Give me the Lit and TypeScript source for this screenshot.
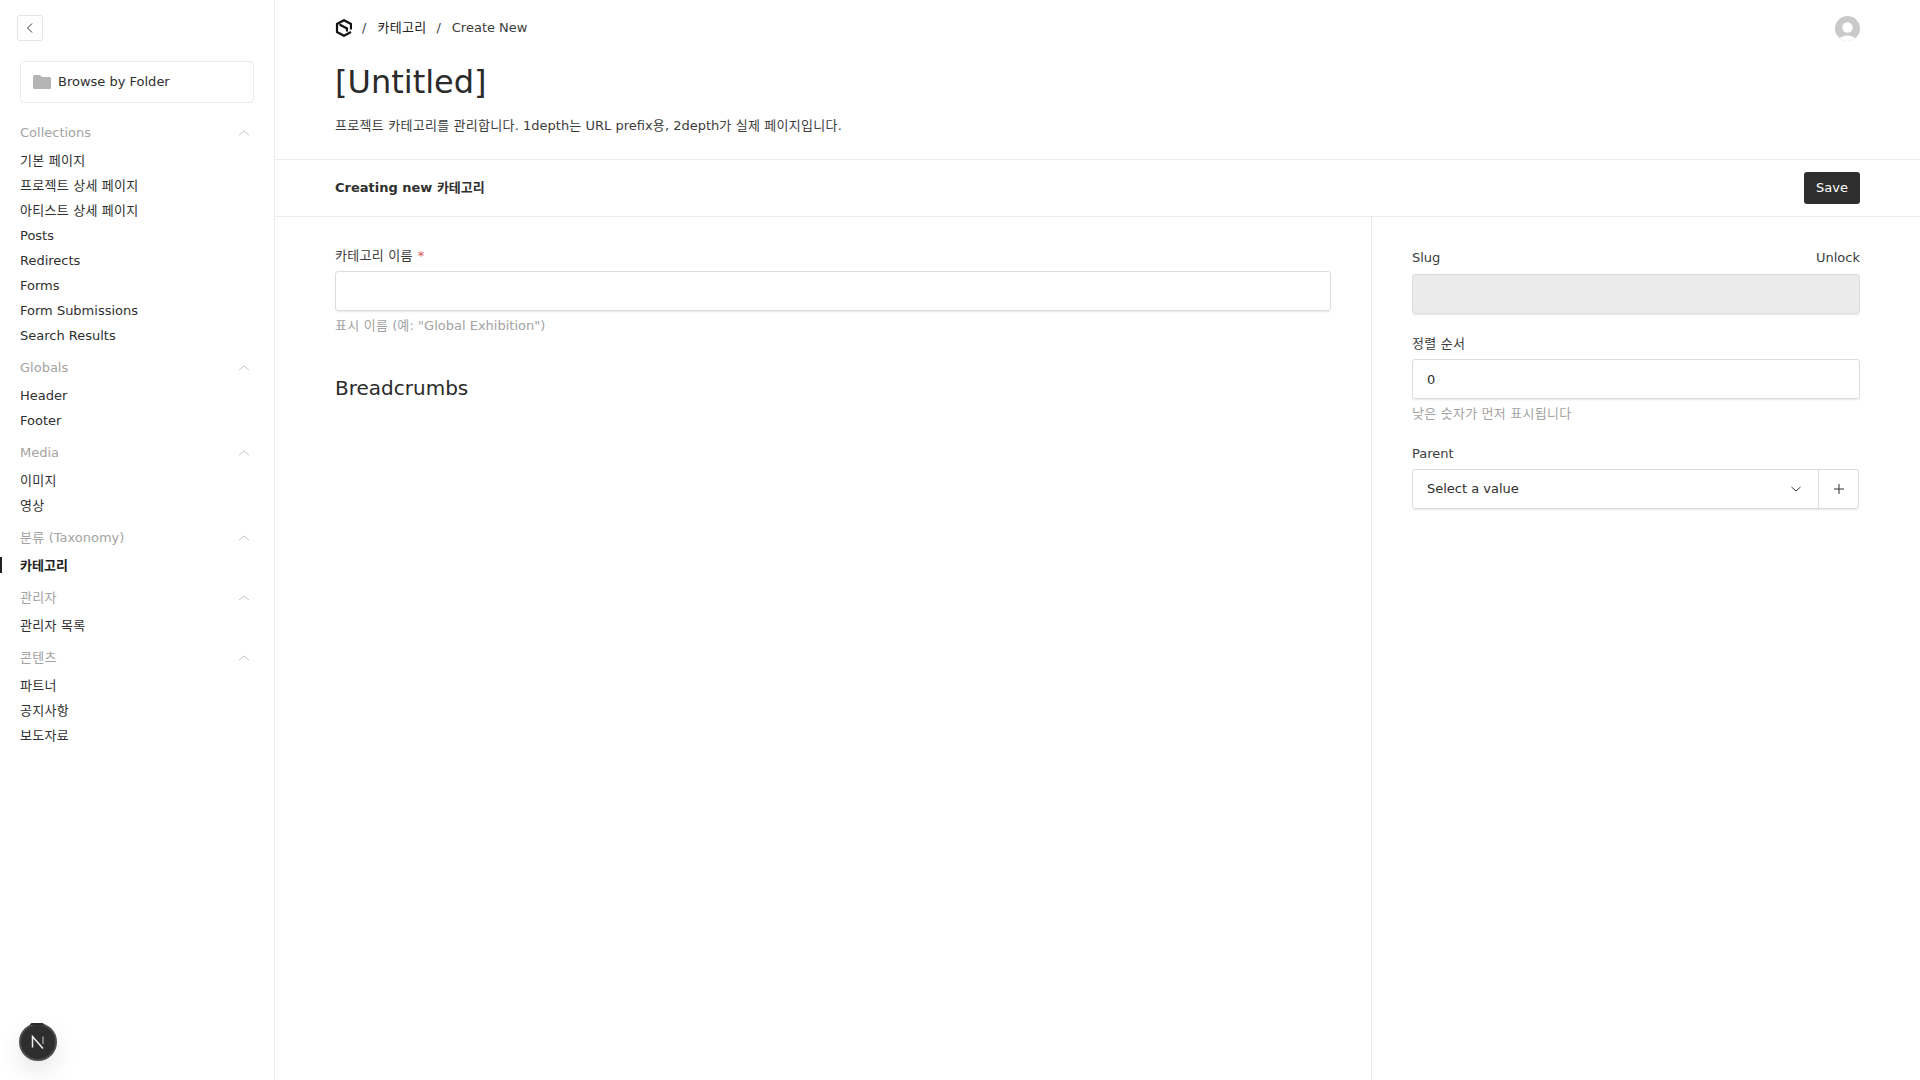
import { LitElement, html, css, svg } from "lit";
import { customElement } from "lit/decorators.js";

const groups: { label: string; items: string[] }[] = [
  { label: "Collections", items: ["기본 페이지", "프로젝트 상세 페이지", "아티스트 상세 페이지", "Posts", "Redirects", "Forms", "Form Submissions", "Search Results"] },
  { label: "Globals", items: ["Header", "Footer"] },
  { label: "Media", items: ["이미지", "영상"] },
  { label: "분류 (Taxonomy)", items: ["카테고리"] },
  { label: "관리자", items: ["관리자 목록"] },
  { label: "콘텐츠", items: ["파트너", "공지사항", "보도자료"] },
];

const chevronUp = svg`<svg class="chev" width="12" height="12" viewBox="0 0 12 12" fill="none"><path d="M1 8 L6 4 L11 8" stroke="#c4c4c4" stroke-width="1"/></svg>`;

/** Wraps Hangul runs so they can carry the reference's slightly wider tracking. */
const ko = (text: string) =>
  text.split(/([가-힣]+)/).map((part, i) => (i % 2 ? html`<span class="ko">${part}</span>` : part));

@customElement("app-root")
export class AppRoot extends LitElement {
  static styles = css`
    :host { display: block; width: 1920px; height: 1080px; overflow: hidden; background: #fff; color: #2f2f2f;
      font-family: "DejaVu Sans", "Noto Sans CJK KR", sans-serif; font-size: 13px; line-height: 20px; position: relative; }
    * { box-sizing: border-box; }
    .ko { letter-spacing: .29px; }
    .item.active .ko, .creating .ko { letter-spacing: 0; }
    .app { display: flex; height: 100%; }
    .side { width: 275px; flex: none; border-right: 1px solid #ebebeb; padding: 15px 20px 0; }
    .back { width: 26px; height: 26px; margin-left: -3px; border: 1px solid #e3e3e3; border-radius: 3px; display: flex; align-items: center; justify-content: center; }
    .folder { margin-top: 20px; height: 42px; width: 234px; border: 1px solid #ebebeb; border-radius: 4px; display: flex; align-items: center; gap: 7px; padding: 0 11px 0 12px; }
    .group { margin-top: 10px; }
    .folder + .group { margin-top: 20px; }
    .glabel { display: flex; justify-content: space-between; align-items: center; height: 20px; color: #a3a3a3; padding-right: 4px; margin-bottom: 5px; }
    .item { height: 25px; display: flex; align-items: center; color: #2f2f2f; position: relative; }
    .item > span { display: block; }
    .item.active { font-weight: 700; color: #222; }
    .item.active::before { content: ""; position: absolute; left: -20px; top: 4px; height: 16px; width: 2px; background: #222; }
    .main { flex: 1; min-width: 0; display: flex; flex-direction: column; }
    .top { padding: 0 60px; height: 159px; }
    .crumbs { height: 56px; display: flex; align-items: center; justify-content: space-between; }
    .trail { display: flex; align-items: center; color: #3c3c3c; }
    .sep { margin: 0 11px 0 10px; }
    .cur { color: #222; }
    h1 { margin: 0; font-size: 32px; font-weight: 400; line-height: 53px; color: #2b2b2b; }
    .desc { margin-top: 7px; color: #3c3c3c; }
    .controls { height: 58px; border-top: 1px solid #ebebeb; border-bottom: 1px solid #ebebeb; padding: 0 60px; display: flex; align-items: center; justify-content: space-between; }
    .creating { font-weight: 700; color: #2f2f2f; }
    .save { width: 56px; height: 32px; background: #2f2f2f; color: #fff; border-radius: 3px; display: flex; align-items: center; justify-content: center; }
    .body { flex: 1; display: flex; }
    .left { width: 1097px; flex: none; border-right: 1px solid #ebebeb; padding: 29px 40px 0 60px; }
    .right { flex: 1; padding: 31px 60px 0 40px; }
    .label { display: flex; justify-content: space-between; color: #3c3c3c; height: 20px; }
    .req { color: #e0555a; margin-left: 5px; }
    .input { height: 40px; margin-top: 5px; border: 1px solid #dcdcdc; border-radius: 3px; background: #fff; box-shadow: 0 2px 2px -1px rgba(0,0,0,.1); display: flex; align-items: center; padding: 0 15px; }
    .input.ro { background: #ebebeb; margin-top: 6px; }
    .input.num { padding: 1px 14px 0 14px; }
    .help { margin-top: 5px; color: #a3a3a3; height: 20px; }
    h3 { margin: 37px 0 0; font-size: 20px; font-weight: 400; line-height: 30px; color: #2b2b2b; }
    .f2 { margin-top: 20px; }
    .f3 { margin-top: 20px; }
    .sel { display: flex; margin-top: 5px; width: 447px; height: 40px; border: 1px solid #dcdcdc; border-radius: 3px; box-shadow: 0 2px 2px -1px rgba(0,0,0,.1); }
    .sel .val { flex: 1; display: flex; align-items: center; justify-content: space-between; padding: 0 17px 0 14px; border-right: 1px solid #dcdcdc; }
    .sel .add { width: 39px; flex: none; display: flex; align-items: center; justify-content: center; }
    .next { position: absolute; left: 19px; top: 1023px; width: 38px; height: 38px; border-radius: 50%; background: #2e2e2e; border: 2px solid #4d4d4d; box-shadow: 0 10px 24px rgba(0,0,0,.1); display: flex; align-items: center; justify-content: center; }
    .next::before { content: ""; position: absolute; left: 9px; top: -2px; width: 14px; height: 2px; background: #2a2a2a; border-radius: 2px 2px 0 0; }
  `;

  render() {
    return html`
      <div class="app">
        <aside class="side">
          <div class="back"><svg width="12" height="12" viewBox="0 0 12 12" fill="none"><path d="M8 1.5 L3.5 6 L8 10.5" stroke="#333" stroke-width="1"/></svg></div>
          <div class="folder">
            <svg width="18" height="14" viewBox="0 0 18 14"><path d="M1.5 0H7L9 2H16.5A1.5 1.5 0 0 1 18 3.5V12.5A1.5 1.5 0 0 1 16.5 14H1.5A1.5 1.5 0 0 1 0 12.5V1.5A1.5 1.5 0 0 1 1.5 0Z" fill="#b5b5b5"/></svg>
            <span>Browse by Folder</span>
          </div>
          ${groups.map((g) => html`
            <div class="group">
              <div class="glabel"><span>${ko(g.label)}</span>${chevronUp}</div>
              ${g.items.map((i) => html`<div class="item ${i === "카테고리" ? "active" : ""}"><span>${ko(i)}</span></div>`)}
            </div>`)}
        </aside>
        <main class="main">
          <div class="top">
            <div class="crumbs">
              <div class="trail">
                <svg width="17" height="18" viewBox="0 0 17 18" fill="none"><path d="M16 10.5V5L9 1.2L2 5V13L9 16.8L16 13" stroke="#111" stroke-width="2.2"/><path d="M4.5 5.5L12 9.5V12.5" stroke="#111" stroke-width="2.2"/></svg>
                <span class="sep">/</span><span class="cur">${ko("카테고리")}</span><span class="sep">/</span><span>Create New</span>
              </div>
              <svg width="25" height="25" viewBox="0 0 25 25"><defs><clipPath id="c"><circle cx="12.5" cy="12.5" r="12.5"/></clipPath></defs><circle cx="12.5" cy="12.5" r="12.5" fill="#c9c9c9"/><g clip-path="url(#c)"><circle cx="12.5" cy="11.5" r="5.2" fill="#fff"/><ellipse cx="12.5" cy="26.5" rx="10" ry="7" fill="#fff"/></g></svg>
            </div>
            <h1>[Untitled]</h1>
            <div class="desc">${ko("프로젝트 카테고리를 관리합니다. 1depth는 URL prefix용, 2depth가 실제 페이지입니다.")}</div>
          </div>
          <div class="controls">
            <span class="creating">Creating new ${ko("카테고리")}</span>
            <span class="save">Save</span>
          </div>
          <div class="body">
            <section class="left">
              <div class="label"><span>${ko("카테고리 이름")}<span class="req">*</span></span></div>
              <div class="input"></div>
              <div class="help">${ko('표시 이름 (예: "Global Exhibition")')}</div>
              <h3>Breadcrumbs</h3>
            </section>
            <section class="right">
              <div class="label"><span>Slug</span><span>Unlock</span></div>
              <div class="input ro"></div>
              <div class="f2">
                <div class="label"><span>${ko("정렬 순서")}</span></div>
                <div class="input num">0</div>
                <div class="help">${ko("낮은 숫자가 먼저 표시됩니다")}</div>
              </div>
              <div class="f3">
                <div class="label"><span>Parent</span></div>
                <div class="sel">
                  <div class="val"><span>Select a value</span><svg width="10" height="10" viewBox="0 0 10 10" fill="none"><path d="M.5 3 L5 7 L9.5 3" stroke="#333"/></svg></div>
                  <div class="add"><svg width="12" height="12" viewBox="0 0 12 12" fill="none"><path d="M6 1V11M1 6H11" stroke="#333"/></svg></div>
                </div>
              </div>
            </section>
          </div>
        </main>
      </div>
      <div class="next"><svg width="14" height="14" viewBox="0 0 14 14" fill="none"><path d="M1.5 12.5V1.5L12 13.5" stroke="#f0f0f0" stroke-width="1.5"/><path d="M12 1.5V9" stroke="#999" stroke-width="1.5"/></svg></div>
    `;
  }
}
